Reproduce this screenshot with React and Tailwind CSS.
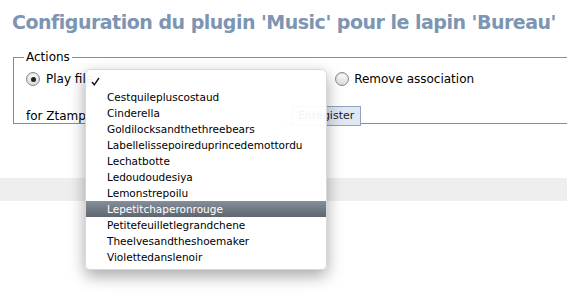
import React from 'react';

const files = [
  'Cestquilepluscostaud',
  'Cinderella',
  'Goldilocksandthethreebears',
  'Labellelissepoireduprincedemottordu',
  'Lechatbotte',
  'Ledoudoudesiya',
  'Lemonstrepoilu',
  'Lepetitchaperonrouge',
  'Petitefeuilletlegrandchene',
  'Theelvesandtheshoemaker',
  'Violettedanslenoir',
];

const Radio = ({ checked }) => (
  <span className="inline-flex items-center justify-center w-[14px] h-[14px] rounded-full border border-[#8a8a8a] bg-gradient-to-b from-[#ffffff] to-[#d9d9d9] shadow-[inset_0_1px_1px_rgba(0,0,0,0.15)]">
    {checked && <span className="w-[5px] h-[5px] rounded-full bg-[#222]" />}
  </span>
);

const App = () => {
  return (
    <div className="relative w-[567px] h-[305px] overflow-hidden bg-white text-[12px] text-black font-['DejaVu_Sans',sans-serif]">
      <h1 className="pl-[12px] pt-[10px] whitespace-nowrap text-[19px] leading-[24px] font-bold text-[#7d95b3] tracking-[-0.5px]">
        Configuration du plugin 'Music' pour le lapin 'Bureau'
      </h1>

      <fieldset className="ml-[13px] mt-[16px] w-[600px] h-[74px] border border-[#8c8c8c] px-[12px] pt-[4px]">
        <legend className="px-[2px] -ml-[2px] leading-[14px]">Actions</legend>
        <div className="flex items-center h-[16px] mt-[3px]">
          <Radio checked />
          <span className="ml-[6px]">Play file</span>
          <span className="w-[238px] ml-[4px]" />
          <Radio />
          <span className="ml-[5px]">Remove association</span>
        </div>
        <div className="flex items-center h-[20px] mt-[19px]">
          <span>for Ztamp</span>
          <span className="ml-[2px] w-[198px] h-[19px] rounded border border-[#e4e4e4] bg-[#fbfbfb]" />
          <button className="ml-[5px] h-[20px] px-[6px] border border-[#8ea4bd] bg-[#dfe8f2] text-[11px] leading-[18px] text-[#222]">
            Enregister
          </button>
        </div>
      </fieldset>

      <div className="mt-[54px] h-[23px] bg-[#eeeeee]" />

      <div className="absolute left-[85px] top-[69px] w-[242px] h-[201px] rounded-[5px] bg-white/95 shadow-[0_6px_16px_rgba(0,0,0,0.35)] border border-[#d8d8d8] pt-[3px] text-[10.5px]">
        <div className="h-[16px] flex items-center pl-[5px]">
          <svg width="9" height="9" viewBox="0 0 9 9">
            <path d="M1 5 L3.3 7.8 L8 1" fill="none" stroke="#111" strokeWidth="1.4" />
          </svg>
        </div>
        {files.map((f, i) => (
          <div
            key={f}
            className={
              i === 7
                ? 'h-[16px] leading-[16px] pl-[21px] text-white bg-gradient-to-b from-[#858e9a] to-[#5d6671]'
                : 'h-[16px] leading-[16px] pl-[21px]'
            }
          >
            {f}
          </div>
        ))}
      </div>
    </div>
  );
};

export default App;
